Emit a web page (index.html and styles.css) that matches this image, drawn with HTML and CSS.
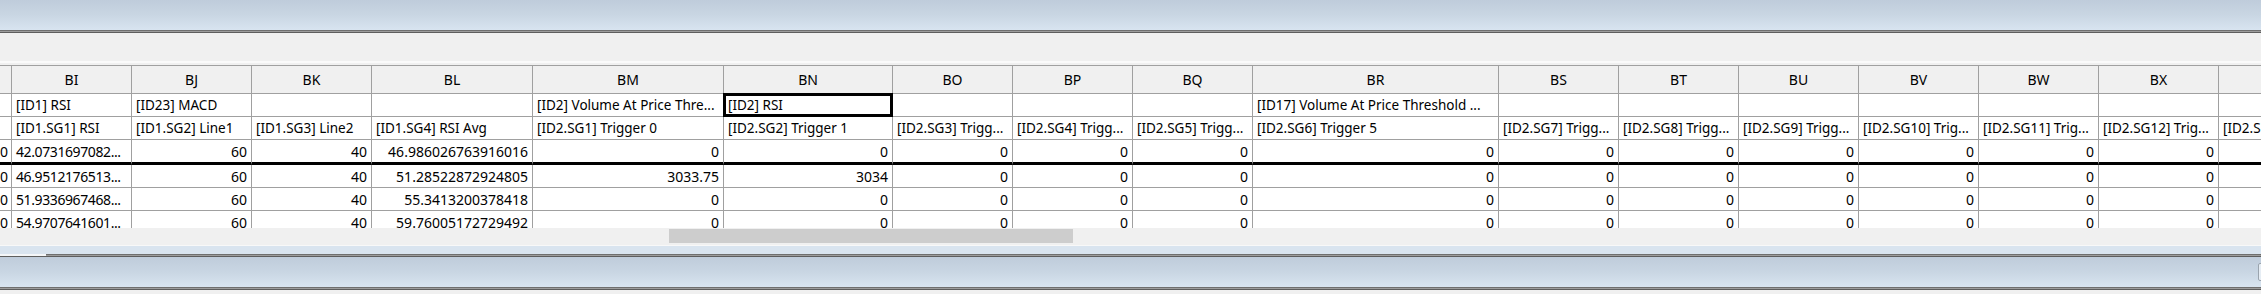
FILE: index.html
```html
<!DOCTYPE html>
<html>
<head>
<meta charset="utf-8">
<link rel="stylesheet" href="styles.css">
</head>
<body>
<div class="app">
  <div class="topbar"></div>
  <div class="sep"></div>
  <div class="toolbar"><div class="tool-hl"></div></div>
  <div class="grid-wrap">
    <div class="grid">
      <div class="row head">
        <div class="c"></div><div class="c">BI</div><div class="c">BJ</div><div class="c">BK</div><div class="c">BL</div><div class="c">BM</div><div class="c">BN</div><div class="c">BO</div><div class="c">BP</div><div class="c">BQ</div><div class="c">BR</div><div class="c">BS</div><div class="c">BT</div><div class="c">BU</div><div class="c">BV</div><div class="c">BW</div><div class="c">BX</div><div class="c"></div>
      </div>
      <div class="row txt">
        <div class="c"></div><div class="c">[ID1] RSI</div><div class="c">[ID23] MACD</div><div class="c"></div><div class="c"></div><div class="c">[ID2] Volume At Price Thre...</div><div class="c sel">[ID2] RSI</div><div class="c"></div><div class="c"></div><div class="c"></div><div class="c">[ID17] Volume At Price Threshold ...</div><div class="c"></div><div class="c"></div><div class="c"></div><div class="c"></div><div class="c"></div><div class="c"></div><div class="c"></div>
      </div>
      <div class="row txt">
        <div class="c"></div><div class="c">[ID1.SG1] RSI</div><div class="c">[ID1.SG2] Line1</div><div class="c">[ID1.SG3] Line2</div><div class="c">[ID1.SG4] RSI Avg</div><div class="c">[ID2.SG1] Trigger 0</div><div class="c">[ID2.SG2] Trigger 1</div><div class="c">[ID2.SG3] Trigg...</div><div class="c">[ID2.SG4] Trigg...</div><div class="c">[ID2.SG5] Trigg...</div><div class="c">[ID2.SG6] Trigger 5</div><div class="c">[ID2.SG7] Trigg...</div><div class="c">[ID2.SG8] Trigg...</div><div class="c">[ID2.SG9] Trigg...</div><div class="c">[ID2.SG10] Trig...</div><div class="c">[ID2.SG11] Trig...</div><div class="c">[ID2.SG12] Trig...</div><div class="c">[ID2.S</div>
      </div>
      <div class="row num frozen">
        <div class="c">0</div><div class="c l">42.0731697082...</div><div class="c">60</div><div class="c">40</div><div class="c">46.986026763916016</div><div class="c">0</div><div class="c">0</div><div class="c">0</div><div class="c">0</div><div class="c">0</div><div class="c">0</div><div class="c">0</div><div class="c">0</div><div class="c">0</div><div class="c">0</div><div class="c">0</div><div class="c">0</div><div class="c"></div>
      </div>
      <div class="row num">
        <div class="c">0</div><div class="c l">46.9512176513...</div><div class="c">60</div><div class="c">40</div><div class="c">51.28522872924805</div><div class="c">3033.75</div><div class="c">3034</div><div class="c">0</div><div class="c">0</div><div class="c">0</div><div class="c">0</div><div class="c">0</div><div class="c">0</div><div class="c">0</div><div class="c">0</div><div class="c">0</div><div class="c">0</div><div class="c"></div>
      </div>
      <div class="row num">
        <div class="c">0</div><div class="c l">51.9336967468...</div><div class="c">60</div><div class="c">40</div><div class="c">55.3413200378418</div><div class="c">0</div><div class="c">0</div><div class="c">0</div><div class="c">0</div><div class="c">0</div><div class="c">0</div><div class="c">0</div><div class="c">0</div><div class="c">0</div><div class="c">0</div><div class="c">0</div><div class="c">0</div><div class="c"></div>
      </div>
      <div class="row num">
        <div class="c">0</div><div class="c l">54.9707641601...</div><div class="c">60</div><div class="c">40</div><div class="c">59.76005172729492</div><div class="c">0</div><div class="c">0</div><div class="c">0</div><div class="c">0</div><div class="c">0</div><div class="c">0</div><div class="c">0</div><div class="c">0</div><div class="c">0</div><div class="c">0</div><div class="c">0</div><div class="c">0</div><div class="c"></div>
      </div>
    </div>
  </div>
  <div class="hscroll"><div class="thumb" style="margin-left:669px;width:404px"></div></div>
  <div class="hl-line"></div>
  <div class="blue-strip"></div>
  <div class="sep"><div class="sep-hl"></div></div>
  <div class="bottombar"><div class="bbox"></div></div>
  <div class="sep"></div>
  <div class="foot"></div>
</div>
</body>
</html>
```
FILE: styles.css
```css
html, body {
  margin: 0;
  padding: 0;
  background: #f0f0f0;
  overflow: hidden;
}
.app {
  width: 2261px;
  height: 294px;
  display: flex;
  flex-direction: column;
  overflow: hidden;
  font-family: "Noto Sans", "Open Sans", sans-serif;
  font-size: 14px;
  color: #000;
}
.topbar {
  height: 30px;
  flex: none;
  background: linear-gradient(to bottom, #bfccdb 0%, #c9d6e3 50%, #d8e4f0 100%);
}
.sep {
  height: 3px;
  flex: none;
  background: linear-gradient(to bottom, #6f6f6f 0, #6f6f6f 1px, #9c9c9c 1px, #9c9c9c 2px, #5e5e5e 2px);
  position: relative;
}
.sep-hl {
  position: absolute;
  left: 0;
  top: 0;
  width: 46px;
  height: 2px;
  background: #f4f6f8;
}
.toolbar {
  height: 32px;
  flex: none;
  background: #f0f0f0;
  display: flex;
  flex-direction: column;
  justify-content: flex-end;
  padding-bottom: 2px;
  box-sizing: border-box;
}
.tool-hl {
  height: 2px;
  background: #fafafa;
}
.grid-wrap {
  height: 163px;
  flex: none;
  overflow: hidden;
  border-top: 1px solid #a0a0a0;
  box-sizing: border-box;
}
.grid {
  display: flex;
  flex-direction: column;
  width: 2261px;
}
.row {
  display: grid;
  grid-template-columns: 12px 120px 120px 120px 161px 191px 169px 120px 120px 120px 246px 120px 120px 120px 120px 120px 120px 43px;
  height: 23px;
  background: #fff;
}
.row.head {
  height: 28px;
  background: #f0f0f0;
}
.row.head .c {
  justify-content: center;
  font-size: 14px;
}
.row.txt .c {
  font-size: 13.5px;
  padding: 0 0 0 4px;
}
.c {
  border-right: 1px solid #a0a0a0;
  border-bottom: 1px solid #a0a0a0;
  box-sizing: border-box;
  display: flex;
  align-items: center;
  padding: 0 4px;
  white-space: nowrap;
  overflow: hidden;
  position: relative;
  min-width: 0;
}
.c:last-child {
  border-right: none;
}
.row.num .c {
  justify-content: flex-end;
}
.row.num .c.l {
  justify-content: flex-start;
  padding: 0 0 0 4px;
  letter-spacing: -0.4px;
}
.row.num .c:first-child {
  padding: 0 3px 0 0;
  justify-content: flex-end;
}
.row.frozen {
  height: 25px;
}
.row.frozen .c {
  border-bottom: 3px solid #000;
}
.row.txt .sel {
  overflow: visible;
}
.sel::after {
  content: "";
  position: absolute;
  left: -1px;
  top: -1px;
  right: -1px;
  bottom: -1px;
  border: 3px solid #000;
  box-sizing: border-box;
}
.hscroll {
  height: 17px;
  flex: none;
  background: #f0f0f0;
  display: flex;
  align-items: flex-start;
  padding-top: 1px;
  box-sizing: border-box;
}
.thumb {
  height: 14px;
  background: #cdcdcd;
}
.hl-line {
  height: 1px;
  flex: none;
  background: #f8f8f8;
}
.blue-strip {
  height: 8px;
  flex: none;
  background: #d9e4ef;
}
.bottombar {
  height: 30px;
  flex: none;
  background: linear-gradient(to bottom, #bfccdb 0%, #c9d6e3 50%, #d8e4f0 100%);
  display: flex;
  justify-content: flex-end;
  align-items: center;
}
.bbox {
  width: 20px;
  height: 18px;
  margin-right: -17px;
  border: 1px solid #9aa4ae;
  border-radius: 2px;
  background: #e6edf4;
  box-sizing: border-box;
}
.foot {
  flex: 1;
  background: #f0f0f0;
}
```
